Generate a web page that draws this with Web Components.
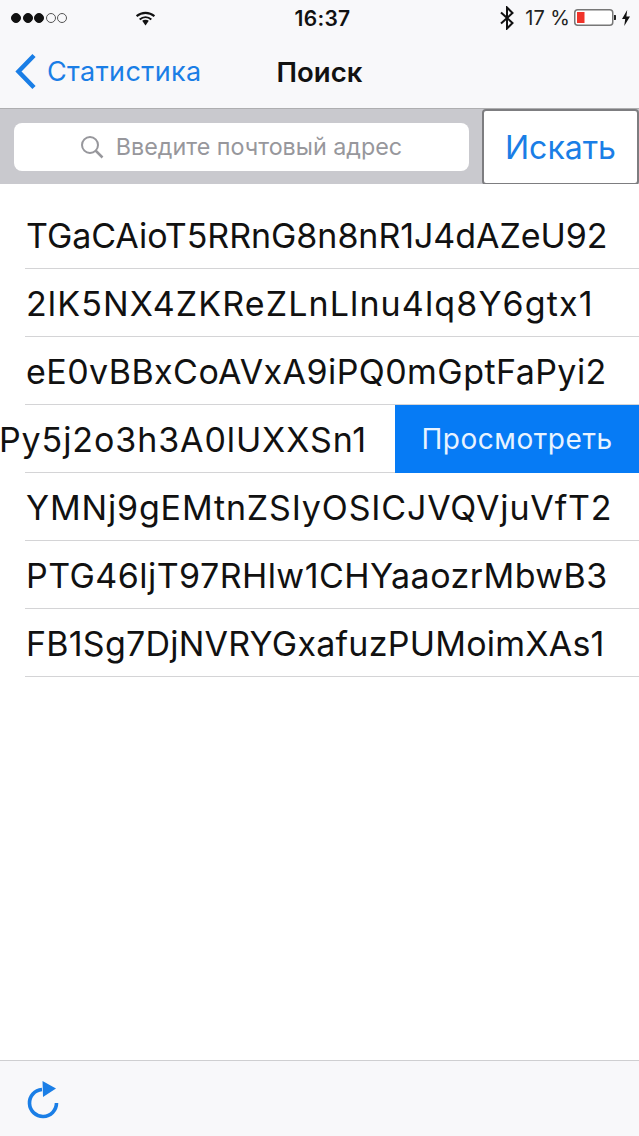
<!DOCTYPE html>
<html lang="ru"><head><meta charset="utf-8"><title>Поиск</title>
<style>
html,body{margin:0;padding:0;background:#fff}
body{font-family:Inter,"Liberation Sans",sans-serif;color:#111}
</style></head><body>
<search-app></search-app>
<script>
class El extends HTMLElement{
  constructor(){super();this.attachShadow({mode:'open'}).innerHTML=this.constructor.html;}
}
const def=(n,h)=>customElements.define(n,class extends El{static html=h});
def('status-bar',`<style>
:host{display:grid;grid-template-columns:1fr auto 1fr;align-items:center;height:36px;padding:0 9px 0 11px;box-sizing:border-box;background:#f8f8fa;color:#111;font-size:22px}
.l,.r{display:flex;align-items:center}
.dots{display:flex;gap:1.500px}
.dots i{width:8px;height:8px;border-radius:50%;background:#111;border:1px solid #111}
.dots i.o{background:none;border-color:#555}
.wifi{margin-left:68px}
.time{font-weight:600;font-size:21px;letter-spacing:.3px;margin-left:4px}
.r{justify-content:flex-end}
.pct{font-size:20px;margin:0 4px 0 10px;color:#222}
.bat{margin-right:6px}
</style>
<div class="l"><div class="dots"><i></i><i></i><i></i><i class="o"></i><i class="o"></i></div>
<svg class="wifi" width="21" height="15" viewBox="0 0 22 16"><path d="M1.500 5.500C7 .8 15 .8 20.500 5.500M4.800 9C8.500 5.800 13.500 5.800 17.200 9" fill="none" stroke="#111" stroke-width="2.200"/><path d="M7.500 10.500C9.500 9 12.500 9 14.500 10.500L11 15.500Z" fill="#111"/></svg></div>
<div class="time">16:37</div>
<div class="r"><svg width="16" height="24" viewBox="0 0 16 24"><path d="M2 6.500 13.500 17 8 22.500V1.500L13.500 7 2 17.500" fill="none" stroke="#111" stroke-width="2"/></svg>
<span class="pct">17 %</span>
<svg class="bat" width="42" height="18" viewBox="0 0 42 18"><rect x=".75" y=".75" width="38" height="15.500" rx="3" fill="#fff" stroke="#777" stroke-width="1.500"/><rect x="3" y="3" width="7.500" height="11" fill="#f0332a"/><path d="M40 6h1.500a1 1 0 0 1 .5 1v3a1 1 0 0 1-.5 1H40z" fill="#222"/></svg>
<svg width="8" height="16" viewBox="0 0 10 17" preserveAspectRatio="none"><path d="M6.500 0 0 9.500h4L2.800 17 10 6.800H5.500z" fill="#111"/></svg></div>`);
def('nav-bar',`<style>
:host{display:flex;align-items:center;height:73px;padding-bottom:1px;box-sizing:border-box;background:#f8f8fa;border-bottom:1px solid #aeaeb0;position:relative}
.back{display:flex;align-items:center;gap:10px;margin-left:15px;color:#1a7ee6;font-size:27px;letter-spacing:.4px}
.title{position:absolute;left:0;right:0;text-align:center;font-weight:600;font-size:27.500px;color:#111}
</style>
<div class="back"><svg width="22" height="37" viewBox="0 0 22 37"><path d="M19 2.500 3.500 18.500 19 34.500" fill="none" stroke="#1a7ee6" stroke-width="4.500"/></svg><span>Статистика</span></div>
<div class="title"><slot></slot></div>`);
def('search-bar',`<style>
:host{display:flex;align-items:center;height:75px;box-sizing:border-box;background:#c9c9ce;padding-left:14px}
.field{flex:1;height:48px;background:#fff;border-radius:8px;display:flex;align-items:center;justify-content:center;gap:12px;color:#97979c;font-size:23.300px;margin-right:13px;padding-right:1px}
button{width:157px;height:76px;margin-top:1px;box-sizing:border-box;background:#fff;border:2px solid #7d7d80;border-radius:4px;color:#1a7ee6;font:32px Inter,"Liberation Sans",sans-serif;padding:0}
</style>
<div class="field"><svg width="24" height="24" viewBox="0 0 24 24"><circle cx="10" cy="10" r="8" fill="none" stroke="#97979c" stroke-width="2"/><path d="M15.500 15.500 22.500 22.500" stroke="#97979c" stroke-width="2.500"/></svg><span>Введите почтовый адрес</span></div>
<button>Искать</button>`);
def('mail-row',`<style>
:host{display:flex;height:68px;box-sizing:border-box;position:relative;overflow:hidden;font-size:34px;color:#111;align-items:center}
:host::after{content:"";position:absolute;left:25px;right:0;bottom:0;height:1px;background:#d4d4d6}
.t{flex:1;padding-left:26px;white-space:nowrap}
:host([swiped]) .t{padding-left:0;margin-left:-1px}
.act{display:none;width:244px;height:100%;background:#067bf5;color:#e8f3ff;font-size:28px;letter-spacing:.55px;align-items:center;justify-content:center;position:relative;z-index:1}
:host([swiped]) .act{display:flex}
</style><div class="t"><slot></slot></div><div class="act">Просмотреть</div>`);
def('mail-list',`<style>:host{display:block;flex:1;padding-top:17px;background:#fff}</style><slot></slot>`);
def('tool-bar',`<style>
:host{display:flex;align-items:center;height:76px;box-sizing:border-box;background:#f8f8fa;border-top:1px solid #cfcfd1;padding:2px 0 0 27px}
</style>
<svg width="32" height="38" viewBox="0 0 32 38"><path d="M29.500 22A13.500 13.500 0 1 1 15 8.500" fill="none" stroke="#1a7ee6" stroke-width="3.600"/><path d="M15.500 0 29 7.500 16 16z" fill="#1a7ee6"/></svg>`);
def('search-app',`<style>:host{display:flex;flex-direction:column;width:639px;height:1136px;overflow:hidden}</style>
<status-bar></status-bar>
<nav-bar>Поиск</nav-bar>
<search-bar></search-bar>
<mail-list>
<mail-row style="letter-spacing:-.05px">TGaCAioT5RRnG8n8nR1J4dAZeU92</mail-row>
<mail-row style="letter-spacing:1.120px">2lK5NX4ZKReZLnLlnu4lq8Y6gtx1</mail-row>
<mail-row style="letter-spacing:.44px">eE0vBBxCoAVxA9iPQ0mGptFaPyi2</mail-row>
<mail-row swiped style="letter-spacing:.9px">Py5j2o3h3A0lUXXSn1</mail-row>
<mail-row style="letter-spacing:.84px">YMNj9gEMtnZSIyOSICJVQVjuVfT2</mail-row>
<mail-row style="letter-spacing:.45px">PTG46ljT97RHlw1CHYaaozrMbwB3</mail-row>
<mail-row style="letter-spacing:.24px">FB1Sg7DjNVRYGxafuzPUMoimXAs1</mail-row>
</mail-list>
<tool-bar></tool-bar>`);
</script></body></html>
